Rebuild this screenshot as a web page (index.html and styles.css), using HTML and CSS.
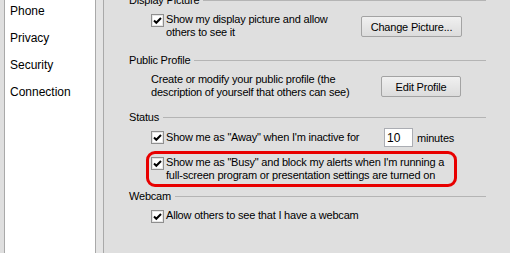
FILE: index.html
```html
<!DOCTYPE html>
<html lang="en">

<head>
    <meta charset="UTF-8">
    <title>Options - Privacy</title>
    <link rel="stylesheet" href="styles.css">
</head>

<body>
    <div class="window">
        <nav class="nav">
            <div class="nav-item">Phone</div>
            <div class="nav-item">Privacy</div>
            <div class="nav-item">Security</div>
            <div class="nav-item">Connection</div>
        </nav>
        <div class="splitter"></div>

        <main class="content">
            <section class="group group-picture">
                <div class="group-title"><span>Display Picture</span></div>
                <div class="group-body">
                    <label class="check">
                        <span class="box"><svg width="11" height="11" viewBox="0 0 11 11"><path d="M2 5.5 L4.3 7.8 L9 3" fill="none" stroke="#000" stroke-width="2"/></svg></span>
                        <span class="check-text">Show my display picture and allow<br>others to see it</span>
                    </label>
                    <button class="btn btn-picture">Change Picture...</button>
                </div>
            </section>

            <section class="group group-profile">
                <div class="group-title"><span>Public Profile</span></div>
                <div class="group-body">
                    <p class="desc">Create or modify your public profile (the<br>description of yourself that others can see)</p>
                    <button class="btn btn-profile">Edit Profile</button>
                </div>
            </section>

            <section class="group group-status">
                <div class="group-title"><span>Status</span></div>
                <div class="away-row">
                    <label class="check">
                        <span class="box"><svg width="11" height="11" viewBox="0 0 11 11"><path d="M2 5.5 L4.3 7.8 L9 3" fill="none" stroke="#000" stroke-width="2"/></svg></span>
                        <span class="check-text away-text">Show me as &quot;Away&quot; when I'm inactive for</span>
                    </label>
                    <input class="minutes" type="text" value="10">
                    <span class="unit">minutes</span>
                </div>
                <div class="highlight">
                    <label class="check">
                        <span class="box"><svg width="11" height="11" viewBox="0 0 11 11"><path d="M2 5.5 L4.3 7.8 L9 3" fill="none" stroke="#000" stroke-width="2"/></svg></span>
                        <span class="check-text">Show me as &quot;Busy&quot; and block my alerts when I'm running a<br>full-screen program or presentation settings are turned on</span>
                    </label>
                </div>
            </section>

            <section class="group group-webcam">
                <div class="group-title"><span>Webcam</span></div>
                <label class="check webcam-row">
                    <span class="box"><svg width="11" height="11" viewBox="0 0 11 11"><path d="M2 5.5 L4.3 7.8 L9 3" fill="none" stroke="#000" stroke-width="2"/></svg></span>
                    <span class="check-text">Allow others to see that I have a webcam</span>
                </label>
            </section>
        </main>
    </div>
</body>

</html>
```

FILE: styles.css
```css
body {
    margin: 0;
    padding: 0;
    font-family: "Liberation Sans", Arial, sans-serif;
    font-size: 11px;
    letter-spacing: -0.2px;
    color: #000;
    background-color: #dfdfdf;
}

.window {
    display: flex;
    width: 510px;
    height: 253px;
    overflow: hidden;
    background-color: #dfdfdf;
}

/* left list */
.nav {
    margin-left: 4px;
    width: 90px;
    padding-top: 3px;
    font-size: 12px;
    letter-spacing: 0;
    background-color: #fff;
    border-left: 1px solid #a9a9a9;
    border-right: 1px solid #a9a9a9;
}

.nav-item {
    padding-left: 5px;
    height: 27px;
    line-height: 16px;
}

.splitter {
    width: 7px;
    background-color: #e4e4e4;
    border-right: 1px solid #a9a9a9;
}

/* right pane */
.content {
    width: 357px;
    padding-left: 25px;
    margin-top: -7px;
}

.group-title {
    display: flex;
    align-items: center;
    height: 14px;
    line-height: 14px;
}

.group-title::after {
    content: "";
    flex: 1;
    height: 1px;
    margin-left: 4px;
    background-color: #b4b4b4;
}

.group-body {
    display: flex;
    align-items: flex-start;
    padding-left: 22px;
    padding-right: 24px;
    margin-top: 6px;
}

.check {
    display: flex;
    align-items: flex-start;
}

.box {
    display: flex;
    flex-shrink: 0;
    align-items: center;
    justify-content: center;
    width: 11px;
    height: 11px;
    margin-top: 1px;
    margin-right: 2px;
    background-color: #fff;
    border: 1px solid #8f8f8f;
    box-shadow: inset 0 0 0 1px #e6e6e6;
}

.check-text,
.desc {
    line-height: 13px;
    white-space: nowrap;
}

.desc {
    margin: 0;
}

.btn {
    flex-shrink: 0;
    margin-left: auto;
    margin-top: 3px;
    height: 21px;
    padding: 0;
    font-family: inherit;
    font-size: 11px;
    letter-spacing: -0.2px;
    color: #000;
    border: 1px solid #a3a3a3;
    border-radius: 2px;
    background: linear-gradient(#f0f0f0, #e6e6e6 50%, #dcdcdc);
}

.btn-picture {
    width: 101px;
}

.btn-profile {
    width: 80px;
    margin-right: 1px;
}

.group-profile {
    margin-top: 14px;
}

.group-status {
    margin-top: 11px;
}

.away-row {
    display: flex;
    align-items: center;
    padding-left: 22px;
    margin-top: 4px;
}

.away-row .check {
    align-items: center;
}

.away-row .box {
    margin-top: 0;
}

.away-text {
    width: 218px;
}

.minutes {
    box-sizing: border-box;
    width: 29px;
    height: 19px;
    padding: 0 0 0 2px;
    font-family: inherit;
    font-size: 12px;
    border: 1px solid #abadb3;
    background-color: #fff;
}

.unit {
    margin-left: 4px;
}

.highlight {
    width: 303px;
    margin-top: 4px;
    margin-left: 17px;
    padding: 2px 0 2px 2px;
    border: 3px solid #e80000;
    border-radius: 9px;
}

.group-webcam {
    margin-top: 2px;
}

.webcam-row {
    padding-left: 22px;
    margin-top: 6px;
}
```
